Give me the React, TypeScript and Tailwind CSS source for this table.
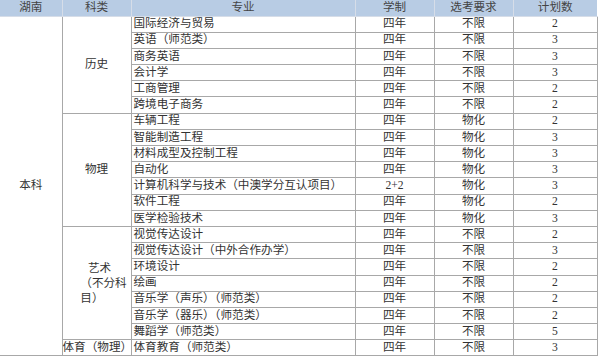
import React from 'react';

type Row = { major: string; years: string; req: string; plan: number };

const history: Row[] = [
  { major: '国际经济与贸易', years: '四年', req: '不限', plan: 2 },
  { major: '英语（师范类）', years: '四年', req: '不限', plan: 3 },
  { major: '商务英语', years: '四年', req: '不限', plan: 3 },
  { major: '会计学', years: '四年', req: '不限', plan: 3 },
  { major: '工商管理', years: '四年', req: '不限', plan: 2 },
  { major: '跨境电子商务', years: '四年', req: '不限', plan: 2 },
];

const physics: Row[] = [
  { major: '车辆工程', years: '四年', req: '物化', plan: 2 },
  { major: '智能制造工程', years: '四年', req: '物化', plan: 3 },
  { major: '材料成型及控制工程', years: '四年', req: '物化', plan: 3 },
  { major: '自动化', years: '四年', req: '物化', plan: 3 },
  { major: '计算机科学与技术（中澳学分互认项目）', years: '2+2', req: '物化', plan: 3 },
  { major: '软件工程', years: '四年', req: '物化', plan: 2 },
  { major: '医学检验技术', years: '四年', req: '物化', plan: 3 },
];

const art: Row[] = [
  { major: '视觉传达设计', years: '四年', req: '不限', plan: 2 },
  { major: '视觉传达设计（中外合作办学）', years: '四年', req: '不限', plan: 3 },
  { major: '环境设计', years: '四年', req: '不限', plan: 2 },
  { major: '绘画', years: '四年', req: '不限', plan: 2 },
  { major: '音乐学（声乐）（师范类）', years: '四年', req: '不限', plan: 2 },
  { major: '音乐学（器乐）（师范类）', years: '四年', req: '不限', plan: 2 },
  { major: '舞蹈学（师范类）', years: '四年', req: '不限', plan: 5 },
];

const sport: Row[] = [{ major: '体育教育（师范类）', years: '四年', req: '不限', plan: 3 }];

const td = 'border border-[#a8a8a8] p-0 align-middle';

const Group = ({ rows, label, first }: { rows: Row[]; label: React.ReactNode; first?: boolean }) => (
  <>
    {rows.map((r, i) => (
      <tr key={r.major} className="h-[16.19px]">
        {first && i === 0 && (
          <td rowSpan={21} className={`${td} border-l-0 text-center`}>本科</td>
        )}
        {i === 0 && (
          <td rowSpan={rows.length} className={`${td} text-center whitespace-nowrap`}>{label}</td>
        )}
        <td className={`${td} pl-[2px] text-left whitespace-nowrap`}>{r.major}</td>
        <td className={`${td} text-center`}>{r.years}</td>
        <td className={`${td} text-center`}>{r.req}</td>
        <td className={`${td} text-center`}>{r.plan}</td>
      </tr>
    ))}
  </>
);

const App = () => {
  return (
    <div className="w-[600px] h-[361px] bg-white overflow-hidden text-[#333] text-[11.6px] leading-none font-['Liberation_Serif','Noto_Sans_CJK_SC',serif]">
      <table className="table-fixed border-collapse w-[597px]">
        <colgroup>
          <col className="w-[62px]" />
          <col className="w-[69px]" />
          <col className="w-[224px]" />
          <col className="w-[79px]" />
          <col className="w-[79px]" />
          <col className="w-[84px]" />
        </colgroup>
        <thead>
          <tr className="h-[16px] bg-[#b8cce4] text-[#444]">
            <th className="font-normal border-r border-b border-[#d6dde8] p-0">湖南</th>
            <th className="font-normal border-r border-b border-[#d6dde8] p-0">科类</th>
            <th className="font-normal border-r border-b border-[#d6dde8] p-0">专业</th>
            <th className="font-normal border-r border-b border-[#d6dde8] p-0">学制</th>
            <th className="font-normal border-r border-b border-[#d6dde8] p-0">选考要求</th>
            <th className="font-normal border-b border-[#d6dde8] p-0">计划数</th>
          </tr>
        </thead>
        <tbody>
          <Group rows={history} label="历史" first />
          <Group rows={physics} label="物理" />
          <Group
            rows={art}
            label={
              <div className="mx-auto w-fit text-left leading-[15px] pl-[14px]">
                <div className="text-center pr-[8px]">艺术</div>
                <div>（不分科</div>
                <div>目）</div>
              </div>
            }
          />
          <Group rows={sport} label="体育（物理）" />
        </tbody>
      </table>
    </div>
  );
};

export default App;
